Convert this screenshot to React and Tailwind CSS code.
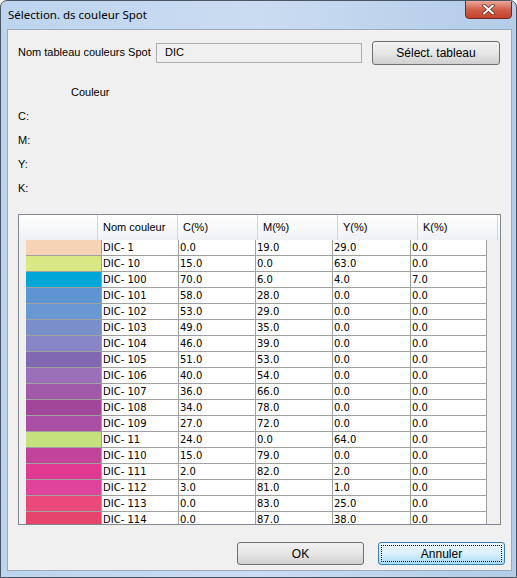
import React from 'react';

const rows = [
    { name: 'DIC- 1', color: '#f7d3b5', c: '0.0', m: '19.0', y: '29.0', k: '0.0' },
    { name: 'DIC- 10', color: '#d9e882', c: '15.0', m: '0.0', y: '63.0', k: '0.0' },
    { name: 'DIC- 100', color: '#00a6d6', c: '70.0', m: '6.0', y: '4.0', k: '7.0' },
    { name: 'DIC- 101', color: '#5e94d2', c: '58.0', m: '28.0', y: '0.0', k: '0.0' },
    { name: 'DIC- 102', color: '#6a98d2', c: '53.0', m: '29.0', y: '0.0', k: '0.0' },
    { name: 'DIC- 103', color: '#7b8ecc', c: '49.0', m: '35.0', y: '0.0', k: '0.0' },
    { name: 'DIC- 104', color: '#8785c6', c: '46.0', m: '39.0', y: '0.0', k: '0.0' },
    { name: 'DIC- 105', color: '#8169b2', c: '51.0', m: '53.0', y: '0.0', k: '0.0' },
    { name: 'DIC- 106', color: '#9b70b8', c: '40.0', m: '54.0', y: '0.0', k: '0.0' },
    { name: 'DIC- 107', color: '#a05aa8', c: '36.0', m: '66.0', y: '0.0', k: '0.0' },
    { name: 'DIC- 108', color: '#a2469a', c: '34.0', m: '78.0', y: '0.0', k: '0.0' },
    { name: 'DIC- 109', color: '#ab4fa4', c: '27.0', m: '72.0', y: '0.0', k: '0.0' },
    { name: 'DIC- 11', color: '#c5e17e', c: '24.0', m: '0.0', y: '64.0', k: '0.0' },
    { name: 'DIC- 110', color: '#c2449a', c: '15.0', m: '79.0', y: '0.0', k: '0.0' },
    { name: 'DIC- 111', color: '#e03a92', c: '2.0', m: '82.0', y: '2.0', k: '0.0' },
    { name: 'DIC- 112', color: '#e0439a', c: '3.0', m: '81.0', y: '1.0', k: '0.0' },
    { name: 'DIC- 113', color: '#e94a7a', c: '0.0', m: '83.0', y: '25.0', k: '0.0' },
    { name: 'DIC- 114', color: '#e6446d', c: '0.0', m: '87.0', y: '38.0', k: '0.0' },
];

const headers = [
    { label: '', w: 'w-[79px]' },
    { label: 'Nom couleur', w: 'w-[80px]' },
    { label: 'C(%)', w: 'w-[80px]' },
    { label: 'M(%)', w: 'w-[80px]' },
    { label: 'Y(%)', w: 'w-[80px]' },
    { label: 'K(%)', w: 'w-[80px]' },
];

// win7 style push button
const Button = ({ children, className = '', primary = false }) => (
    <div
        className={
            'flex items-center justify-center rounded-[3px] border text-[12px] text-black ' +
            (primary
                ? 'border-[#3c7fb1] bg-gradient-to-b from-[#eaf6fd] via-[#d9f0fc] to-[#a9daf5] p-[2px] '
                : 'border-[#707070] bg-gradient-to-b from-[#f2f2f2] via-[#e6e6e6] to-[#d0d0d0] ') +
            className
        }
    >
        {primary ? (
            <div className="flex h-full w-full items-center justify-center border border-dotted border-black">
                {children}
            </div>
        ) : (
            children
        )}
    </div>
);

const cellFont = { fontFamily: '"DejaVu Sans", Verdana, sans-serif' };

const Cell = ({ w, children, last = false }) => (
    <div
        className={`${w} h-full border-l ${last ? 'border-r' : ''} border-[#a0a0a0] bg-white pl-[1px] text-[10px] leading-[15px]`}
        style={cellFont}
    >
        {children}
    </div>
);

const App = () => {
    return (
        <div
            className="flex h-[578px] w-[517px] flex-col overflow-hidden rounded-t-[7px] border border-[#4a5563] bg-gradient-to-r from-[#bdd4ee] via-[#cadcf1] to-[#b3cce8]"
            style={{ fontFamily: '"Liberation Sans", Arial, sans-serif' }}
        >
            {/* title bar */}
            <div className="flex h-[28px] shrink-0 items-start justify-between">
                <div
                    className="pl-[7px] pt-[6px] text-[11.5px] leading-[16px] text-black"
                    style={{ fontFamily: '"Noto Sans", "Open Sans", sans-serif' }}
                >
                    Sélection. ds couleur Spot
                </div>
                <div className="mr-[4px] mt-[-1px] flex h-[19px] w-[47px] items-center justify-center rounded-b-[4px] border border-[#6e2a20] bg-gradient-to-b from-[#e9a99a] via-[#d0604a] to-[#c4422b]">
                    <svg width="13" height="11" viewBox="0 0 13 11">
                        <path d="M2 1.5 L11 9.5 M11 1.5 L2 9.5" stroke="#5b2b25" strokeWidth="3.4" strokeLinecap="round" />
                        <path d="M2 1.5 L11 9.5 M11 1.5 L2 9.5" stroke="#ffffff" strokeWidth="2" strokeLinecap="round" />
                    </svg>
                </div>
            </div>

            {/* client area */}
            <div className="ml-[6px] mr-[4px] flex h-[542px] w-[505px] shrink-0 flex-col border border-[#9aabbd] bg-[#f0f0f0] pl-[10px] text-[11px] text-black">
                <div className="mt-[11px] flex h-[23px] items-center">
                    <div className="w-[138px] whitespace-nowrap">Nom tableau couleurs Spot</div>
                    <div className="flex h-[20px] w-[206px] items-center border border-[#abadb3] bg-[#f0f0f0] pl-[8px]">DIC</div>
                    <Button className="ml-[10px] h-[24px] w-[128px]">Sélect. tableau</Button>
                </div>

                <div className="mt-[16px] flex h-[24px] items-center pl-[53px]">Couleur</div>
                <div className="flex h-[24px] items-center">C:</div>
                <div className="flex h-[24px] items-center">M:</div>
                <div className="flex h-[24px] items-center">Y:</div>
                <div className="flex h-[24px] items-center">K:</div>

                {/* grid */}
                <div className="mt-[14px] flex h-[311px] w-[483px] flex-col overflow-hidden border border-[#828790] bg-[#f0f0f0]">
                    <div className="flex h-[25px] shrink-0 bg-gradient-to-b from-[#ffffff] via-[#f7f8fa] to-[#eef0f3]">
                        {headers.map((h, i) => (
                            <div key={i} className={`${h.w} flex h-full items-center border-r border-[#d5d5d5] pl-[5px]`}>
                                {h.label}
                            </div>
                        ))}
                    </div>
                    <div className="flex flex-col">
                        {rows.map((r) => (
                            <div key={r.name} className="flex h-[16px] shrink-0">
                                <div className="w-[7px]" />
                                <div className="flex h-full border-b border-[#a0a0a0]">
                                    <div className="h-full w-[75px]" style={{ backgroundColor: r.color }} />
                                    <Cell w="w-[77px]">{r.name}</Cell>
                                    <Cell w="w-[77px]">{r.c}</Cell>
                                    <Cell w="w-[77px]">{r.m}</Cell>
                                    <Cell w="w-[78px]">{r.y}</Cell>
                                    <Cell w="w-[77px]" last>{r.k}</Cell>
                                </div>
                            </div>
                        ))}
                    </div>
                </div>

                <div className="mt-[17px] flex gap-[14px] pl-[219px]">
                    <Button className="h-[23px] w-[127px]">OK</Button>
                    <Button primary className="h-[23px] w-[127px]">Annuler</Button>
                </div>
            </div>
        </div>
    );
};

export default App;
